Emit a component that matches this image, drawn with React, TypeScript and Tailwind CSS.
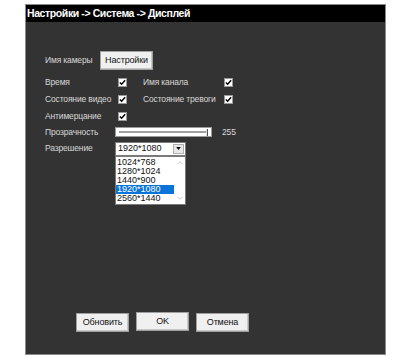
import React from 'react'

const font = { fontFamily: '"Liberation Sans", Arial, sans-serif' }

function Check() {
  return (
    <div className="flex h-[9px] w-[9px] items-center justify-center border border-[#9a9a9a] bg-white">
      <svg viewBox="0 0 8 8" className="h-[7px] w-[7px]">
        <path d="M1 4 L3 6 L7 1.5" fill="none" stroke="#000" strokeWidth="1.6" />
      </svg>
    </div>
  )
}

function Btn({ label, className = '' }: { label: string; className?: string }) {
  return (
    <div
      className={`flex h-[19px] w-[53px] items-center justify-center whitespace-nowrap border border-[#a0a0a0] bg-[#f0f0f0] text-[9px] tracking-[-0.15px] text-[#111] shadow-[inset_-1px_-1px_0_#c8c8c8] ${className}`}
    >
      {label}
    </div>
  )
}

const options = ['1024*768', '1280*1024', '1440*900', '1920*1080', '2560*1440']

export default function App() {
  return (
    <div className="h-[360px] w-[410px] bg-white pt-[4px]" style={font}>
      <div className="ml-[25px] flex h-[351px] w-[361px] flex-col border border-[#8a8a8a] bg-[#333333]">
        <div className="flex h-[17px] items-center whitespace-nowrap bg-black pl-[1px] text-[10.5px] font-bold tracking-[-0.4px] text-white">
          Настройки -&gt; Система -&gt; Дисплей
        </div>

        <div className="flex flex-1 flex-col whitespace-nowrap pl-[19px] pt-[29px] text-[8.5px] tracking-[-0.15px] text-[#d8d8d8]">
          <div className="flex h-[19px] items-center">
            <div className="w-[55px]">Имя камеры</div>
            <Btn label="Настройки" />
          </div>

          <div className="mt-[4px] flex h-[17px] items-center">
            <div className="w-[73px]">Время</div>
            <Check />
            <div className="ml-[16px] w-[81px]">Имя канала</div>
            <Check />
          </div>
          <div className="flex h-[17px] items-center">
            <div className="w-[73px]">Состояние видео</div>
            <Check />
            <div className="ml-[16px] w-[81px]">Состояние тревоги</div>
            <Check />
          </div>
          <div className="flex h-[16px] items-center">
            <div className="w-[73px]">Антимерцание</div>
            <Check />
          </div>

          <div className="flex h-[16px] items-center">
            <div className="w-[70px]">Прозрачность</div>
            <div className="relative flex h-[10px] w-[97px] items-center border border-[#9a9a9a] bg-white px-[3px]">
              <div className="h-[2px] flex-1 border-y border-[#a0a0a0] bg-[#e0e0e0]" />
              <div className="absolute right-[3px] top-[1px] h-[7px] w-[2px] border-r border-[#555] bg-[#ddd]" />
            </div>
            <div className="ml-[10px]">255</div>
          </div>

          <div className="mt-[1px] flex h-[15px] items-center">
            <div className="w-[70px]">Разрешение</div>
            <div className="relative text-[9px] tracking-normal">
              <div className="flex h-[14px] w-[71px] items-center border border-[#7a7a7a] bg-white pl-[2px] text-[#111]">
                <span className="flex-1">1920*1080</span>
                <div className="mr-[1px] flex h-[10px] w-[11px] items-center justify-center border border-[#b0b0b0] bg-[#e8e8e8]">
                  <svg viewBox="0 0 6 4" className="h-[3px] w-[5px]">
                    <path d="M0 0 H6 L3 4 Z" fill="#000" />
                  </svg>
                </div>
              </div>
              <div className="absolute left-0 top-[14px] flex w-[71px] border border-[#7a7a7a] bg-white text-[#111]">
                <div className="flex flex-1 flex-col py-[1px]">
                  {options.map((o) => (
                    <div
                      key={o}
                      className={`h-[9px] pl-[1px] leading-[9px] ${o === '1920*1080' ? 'bg-[#0a74d8] text-white' : ''}`}
                    >
                      {o}
                    </div>
                  ))}
                </div>
                <div className="flex w-[11px] flex-col items-center justify-between py-[4px]">
                  <svg viewBox="0 0 6 4" className="h-[3px] w-[6px]">
                    <path d="M0 4 L3 1 L6 4" fill="none" stroke="#b0b0b0" strokeWidth="1" />
                  </svg>
                  <svg viewBox="0 0 6 4" className="h-[3px] w-[6px]">
                    <path d="M0 0 L3 3 L6 0" fill="none" stroke="#b0b0b0" strokeWidth="1" />
                  </svg>
                </div>
              </div>
            </div>
          </div>

          <div className="mt-auto mb-[22px] ml-[31px] flex items-start gap-[7px]">
            <Btn label="Обновить" className="mt-[1px]" />
            <Btn label="OK" />
            <Btn label="Отмена" className="mt-[1px]" />
          </div>
        </div>
      </div>
    </div>
  )
}
